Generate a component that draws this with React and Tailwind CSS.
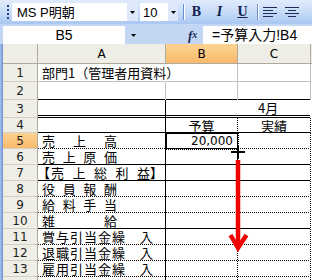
import React from "react";

const SANS = "font-['Liberation_Sans','Noto_Sans_CJK_JP',sans-serif]";
const JP = "font-['Noto_Sans_CJK_JP',sans-serif]";
const NUM = "font-['DejaVu_Sans',sans-serif]";

// cell border lines
const bottomLine = {
  gray: "h-px bg-[#c0c0c0]",
  black: "h-px bg-black",
  double: "h-[3px] border-y border-black",
  dotted: "h-px bg-[repeating-linear-gradient(90deg,#000_0_1px,transparent_1px_2px)]",
};
const rightLine = {
  gray: "w-px bg-[#c0c0c0]",
  black: "w-px bg-black",
  dotted: "w-px bg-[repeating-linear-gradient(180deg,#000_0_1px,transparent_1px_2px)]",
  none: "w-px",
};

const Spread = ({ chars, w }) => (
  <div className={`flex justify-between ${w}`}>
    {chars.map((c, i) => (
      <span key={i}>{c}</span>
    ))}
  </div>
);

// 7-char labels: tight run, last char pushed to the end
const Seven = ({ chars }) => (
  <div className="flex w-[111px]">
    {chars.slice(0, 6).map((c, i) => (
      <span key={i} className="mr-px">
        {c}
      </span>
    ))}
    <span className="ml-auto">{chars[6]}</span>
  </div>
);

const rows = [
  { n: 1, h: "h-[18px]", bot: "gray", ar: "none", br: "gray", cr: "gray", a: <span className="whitespace-nowrap">部門1（管理者用資料）</span> },
  { n: 2, h: "h-[18px]", bot: "black", ar: "gray", br: "gray", cr: "gray" },
  { n: 3, h: "h-[18px]", bot: "double", ar: "black", merged: true, cr: "none" },
  { n: 4, h: "h-[15px]", bot: "black", ar: "black", br: "dotted", cr: "dotted", b: "予算", c: "実績" },
  { n: 5, h: "h-4", bot: "dotted", ar: "black", br: "dotted", cr: "dotted", a: <Spread chars={["売", "上", "高"]} w="w-[75px]" />, b: "20,000" },
  { n: 6, h: "h-4", bot: "black", ar: "black", br: "dotted", cr: "dotted", a: <Spread chars={["売", "上", "原", "価"]} w="w-[75px]" /> },
  {
    n: 7, h: "h-4", bot: "black", ar: "black", br: "dotted", cr: "dotted",
    a: (
      <div className="-ml-[5px] flex">
        <span>【</span>
        <Spread chars={["売", "上", "総", "利", "益"]} w="w-[99px] ml-px" />
        <span>】</span>
      </div>
    ),
  },
  { n: 8, h: "h-4", bot: "dotted", ar: "black", br: "dotted", cr: "dotted", a: <Spread chars={["役", "員", "報", "酬"]} w="w-[75px]" /> },
  { n: 9, h: "h-4", bot: "dotted", ar: "black", br: "dotted", cr: "dotted", a: <Spread chars={["給", "料", "手", "当"]} w="w-[75px]" /> },
  { n: 10, h: "h-4", bot: "black", ar: "black", br: "dotted", cr: "dotted", a: <Spread chars={["雑", "給"]} w="w-[75px]" /> },
  { n: 11, h: "h-4", bot: "dotted", ar: "black", br: "dotted", cr: "dotted", a: <Seven chars={["賞", "与", "引", "当", "金", "繰", "入"]} /> },
  { n: 12, h: "h-4", bot: "dotted", ar: "black", br: "dotted", cr: "dotted", a: <Seven chars={["退", "職", "引", "当", "金", "繰", "入"]} /> },
  { n: 13, h: "h-4", bot: "dotted", ar: "black", br: "dotted", cr: "dotted", a: <Seven chars={["雇", "用", "引", "当", "金", "繰", "入"]} /> },
  // row 14 only peeks in at the bottom edge, its label is out of view
  { n: 14, label: "", h: "h-4", bot: "dotted", ar: "black", br: "dotted", cr: "dotted" },
];

const Cell = ({ w, bot, right, className = "", children }) => (
  <div className={`flex ${w}`}>
    <div className="flex min-w-0 flex-1 flex-col">
      <div className={`flex flex-1 items-center ${className}`}>{children}</div>
      <div className={bottomLine[bot]} />
    </div>
    <div className={rightLine[right]} />
  </div>
);

const Drop = () => (
  <svg width="5" height="3" viewBox="0 0 5 3">
    <path d="M0 0h5L2.5 3z" fill="#000" />
  </svg>
);

const Sep = () => (
  <div className="flex h-[16px]">
    <div className="w-px bg-[#6a8ccb]" />
    <div className="w-px bg-white" />
  </div>
);

const AlignIcon = ({ center }) => (
  <svg width="14" height="11" viewBox="0 0 14 11">
    <g stroke="#1b2a57" strokeWidth="1">
      <path d="M0 0.5h14" />
      <path d={center ? "M3 3.5h8" : "M0 3.5h10"} />
      <path d="M0 6.5h14" />
      <path d={center ? "M3 9.5h8" : "M0 9.5h10"} />
    </g>
  </svg>
);

function Toolbar() {
  return (
    <div className={`flex h-[24px] items-center bg-gradient-to-b from-[#e0ebfc] via-[#c8dcf8] to-[#aac7f2] ${SANS}`}>
      <div className="ml-[7px] h-[15px] w-[2px] bg-[repeating-linear-gradient(180deg,#27418a_0_2px,transparent_2px_4px)]" />
      <div className="ml-[3px] flex h-[18px]">
        <div className="flex w-[115px] items-center bg-white pl-[5px] text-[13px] leading-none text-black">MS P明朝</div>
        <div className="flex w-[11px] items-center justify-center bg-[#dde8fa]">
          <Drop />
        </div>
      </div>
      <div className="ml-[2px] flex h-[18px]">
        <div className="flex w-[28px] items-center bg-white pl-[3px] text-[13px] leading-none text-black">10</div>
        <div className="flex w-[10px] items-center justify-center bg-[#dde8fa]">
          <Drop />
        </div>
      </div>
      <div className="ml-[5px]">
        <Sep />
      </div>
      <div className="flex font-['Liberation_Serif',serif] text-[14px] font-bold leading-none text-[#10214f]">
        <span className="w-[23px] text-center">B</span>
        <span className="w-[23px] text-center italic">I</span>
        <span className="w-[23px] text-center underline">U</span>
      </div>
      <div className="ml-[3px]">
        <Sep />
      </div>
      <div className="flex">
        <span className="flex w-[22px] justify-center">
          <AlignIcon />
        </span>
        <span className="flex w-[22px] justify-center">
          <AlignIcon center />
        </span>
      </div>
    </div>
  );
}

function FormulaBar() {
  return (
    <div className={`flex h-[20px] bg-[#c3d7f5] ${SANS}`}>
      <div className="ml-[3px] mt-[2px] flex h-[18px] w-[122px] items-center justify-center bg-white text-[14px] leading-none text-black">
        B5
      </div>
      <div className="flex w-[16px] items-center justify-center pt-[2px]">
        <Drop />
      </div>
      <div className="ml-[47px] flex w-[12px] items-center pt-[2px] font-['Liberation_Serif',serif] text-[13px] font-bold italic leading-none text-[#1b2a57]">
        f<span className="text-[10px]">x</span>
      </div>
      <div className="ml-[3px] mt-[2px] flex h-[18px] flex-1 items-center bg-white pl-[9px] text-[14px] leading-none text-black">
        =予算入力!B4
      </div>
    </div>
  );
}

function Sheet() {
  const beige = "bg-[#efeee6]";
  const orange = "bg-gradient-to-b from-[#fcd391] to-[#f8ba6c]";
  return (
    <div className="flex">
      <div className="w-[3px] self-stretch bg-gradient-to-r from-[#a9c4ee] to-[#6d8fcf]" />
      <div className="w-[309px] bg-white">
        {/* column headers */}
        <div className={`flex h-[20px] text-[12px] leading-none text-black ${NUM}`}>
          <div className={`w-[35px] border-r border-b border-[#aeab9e] ${beige}`} />
          <div className={`flex w-[128px] items-end justify-center border-r border-b border-[#aeab9e] pb-[3px] ${beige}`}>A</div>
          <div className={`flex w-[72px] items-end justify-center border-r border-b border-[#aeab9e] pb-[3px] ${orange}`}>B</div>
          <div className={`flex w-[73px] items-end justify-center border-r border-b border-[#aeab9e] pb-[3px] ${beige}`}>C</div>
          <div className={`w-px border-b border-[#aeab9e] ${beige}`} />
        </div>

        {rows.map((r) => (
          <div key={r.n} className={`flex ${r.h} text-[13px] leading-none text-black ${JP}`}>
            <div
              className={`flex w-[35px] items-center justify-center border-r border-b border-r-[#aeab9e] border-b-[#d2d0c4] text-[12px] text-[#222] ${NUM} ${
                r.n === 5 ? orange : beige
              }`}
            >
              {r.label ?? r.n}
            </div>
            <Cell w="w-[128px]" bot={r.bot} right={r.ar} className="pl-[4px]">
              {r.a}
            </Cell>
            {r.merged ? (
              <Cell w="w-[145px]" bot={r.bot} right={r.cr} className="pl-[92px]">
                4月
              </Cell>
            ) : (
              <>
                <Cell w="w-[72px]" bot={r.bot} right={r.br} className={r.n === 5 ? `justify-end pr-[4px] text-[12px] ${NUM}` : "justify-center"}>
                  {r.b}
                </Cell>
                <Cell w="w-[73px]" bot={r.bot} right={r.cr} className="justify-center">
                  {r.c}
                </Cell>
              </>
            )}
          </div>
        ))}
      </div>
    </div>
  );
}

export default function App() {
  return (
    <div className="relative h-[280px] w-[312px] overflow-hidden bg-white">
      <Toolbar />
      <FormulaBar />
      <Sheet />

      {/* active cell B5 */}
      <div className="absolute left-[165px] top-[132px] h-[18px] w-[74px] border border-dotted border-black">
        <div className="h-full w-full border border-black" />
      </div>

      {/* fill cursor */}
      <svg className="absolute left-[231px] top-[145px]" width="14" height="14" viewBox="0 0 14 14">
        <path d="M6 0h2v14H6zM0 6h14v2H0z" fill="#000" />
      </svg>

      {/* red drag arrow */}
      <svg className="absolute left-[228px] top-[158px]" width="22" height="96" viewBox="0 0 22 96">
        <path d="M10 2V88" stroke="#f00000" strokeWidth="4.5" />
        <path d="M2.5 77L10 90L18.5 77" fill="none" stroke="#f00000" strokeWidth="4.5" />
      </svg>
    </div>
  );
}
